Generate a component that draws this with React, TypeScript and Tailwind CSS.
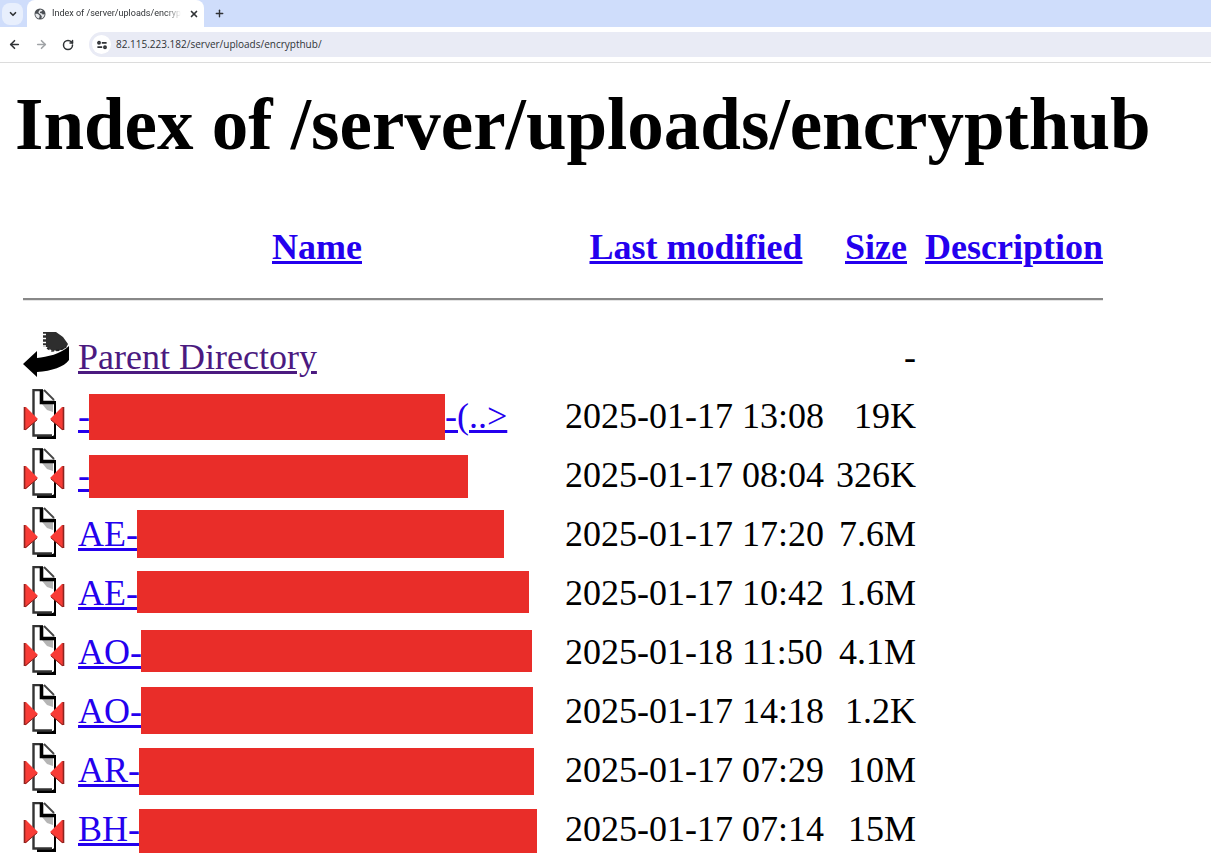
import { ArrowLeft, ArrowRight, ChevronDown, Plus, RotateCw, X } from 'lucide-react'

const headings = ['Name', 'Last modified', 'Size', 'Description']

const files = [
  { name: '-', rest: '-(..>', bar: 'mt-[7px] w-[356px] h-[46px]', date: '2025-01-17 13:08', size: '19K' },
  { name: '-', rest: '', bar: 'mt-[9px] w-[379px] h-[43px]', date: '2025-01-17 08:04', size: '326K' },
  { name: 'AE-', rest: '', bar: 'mt-[5px] w-[367px] h-[48px]', date: '2025-01-17 17:20', size: '7.6M' },
  { name: 'AE-', rest: '', bar: 'mt-[7px] w-[392px] h-[42px]', date: '2025-01-17 10:42', size: '1.6M' },
  { name: 'AO-', rest: '', bar: 'mt-[7px] w-[391px] h-[42px]', date: '2025-01-18 11:50', size: '4.1M' },
  { name: 'AO-', rest: '', bar: 'mt-[5px] w-[392px] h-[47px]', date: '2025-01-17 14:18', size: '1.2K' },
  { name: 'AR-', rest: '', bar: 'mt-[7px] w-[395px] h-[47px]', date: '2025-01-17 07:29', size: '10M' },
  { name: 'BH-', rest: '', bar: 'mt-[9px] w-[398px] h-[44px]', date: '2025-01-17 07:14', size: '15M' },
]

function GlobeIcon() {
  return (
    <svg className="h-3 w-3 shrink-0" viewBox="0 0 12 12" aria-hidden="true">
      <circle cx="6" cy="6" r="5.5" fill="#4b4f54" />
      <path d="M1.3 5.8H3.6L5.6 7.2V8.4L5 10.6C2.8 10.2 1.3 8.4 1.3 5.8ZM6 1.4 8.6 2.2 7.4 3.4 6 3.8V5L8 5.4 8.6 6.6 10.6 6.2C10.4 8.4 9 10 7.4 10.4L7.8 8.2 6.4 6.4 4.6 5 4.4 4Z" fill="#e8eaed" />
    </svg>
  )
}

function SiteInfoIcon() {
  return (
    <svg className="h-[10px] w-[10px]" viewBox="0 0 10 10" fill="none" stroke="#303336" strokeWidth="1.7" aria-hidden="true">
      <circle cx="2" cy="2.8" r="1.1" />
      <path d="M4.8 2.8H9.6M.4 7.2H5.2" />
      <circle cx="8" cy="7.2" r="1.1" />
    </svg>
  )
}

function BackIcon() {
  return (
    <svg className="h-[46px] w-[46px]" viewBox="0 0 46 46" aria-hidden="true">
      <path d="M20 1H33L40 6 45 13 43 17 35 20 28 19 24 16H20Z" fill="#2e2e2e" />
      <path d="M18 3.5h5M18 7.5h5M18 11.5h5M18 15h5" stroke="#fff" strokeWidth="1.6" />
      <path d="M24 17 29 20 37 19 43 16" fill="none" stroke="#222" strokeWidth="1.6" strokeDasharray="3 2" />
      <path d="M0 33 14 20V27C24 26 38 23 46 15V29C41 36 29 40 14 41V46Z" fill="#000" />
    </svg>
  )
}

function CompressedIcon() {
  return (
    <svg className="h-[50px] w-[42px]" viewBox="0 0 42 50" aria-hidden="true">
      <path d="M14 48.5H31.5V12" fill="none" stroke="#000" strokeWidth="3" />
      <path d="M10.5 1H21L31 12V46.5H10.5Z" fill="#fff" />
      <path d="M19 15H30V23L24 21Z" fill="#b5b5b5" />
      <path d="M20 1H10.5V46.5H29" fill="none" stroke="#333" strokeWidth="2.4" />
      <path d="M21 1 31 11" fill="none" stroke="#444" strokeWidth="1.8" />
      <path d="M18.5 1V13.5H32" fill="none" stroke="#000" strokeWidth="3.6" />
      <path d="M1 18H3L15 30 3 41H1ZM41 18H39L27 30 39 41H41Z" fill="#f83c36" />
      <path d="M1.5 18V41M40.5 18V41" stroke="#8c2420" strokeWidth="1.6" />
      <path d="M2 41 14 31M40 41 28 31" stroke="#8c2420" strokeWidth="1" />
    </svg>
  )
}

function BrowserBar() {
  return (
    <header className="border-b border-[#dcdcdc] font-['Open_Sans',sans-serif] text-[#303336]">
      <div className="flex h-[27px] items-center bg-[#cfddfb]">
        <button aria-label="Search tabs" className="ml-0.5 flex h-[22px] w-[21px] items-center justify-center rounded-lg bg-[#e8effd]">
          <ChevronDown size={10} strokeWidth={4} />
        </button>
        <div className="ml-1 flex h-full w-[177px] items-center rounded-t-lg bg-white pl-[7px] pr-2">
          <GlobeIcon />
          <span className="ml-1.5 flex-1 whitespace-nowrap font-['Roboto',sans-serif] text-[9px] [mask-image:linear-gradient(to_right,black_88%,transparent)]">
            Index of /server/uploads/encryp
          </span>
          <button aria-label="Close tab" className="ml-2">
            <X size={10} strokeWidth={4} />
          </button>
        </div>
        <button aria-label="New tab" className="ml-2.5">
          <Plus size={11} strokeWidth={3} />
        </button>
      </div>
      <div className="flex h-[35px] items-center bg-white pl-2">
        <button aria-label="Back">
          <ArrowLeft size={13} strokeWidth={3} />
        </button>
        <button aria-label="Forward" className="ml-3.5 text-[#a0a3a6]">
          <ArrowRight size={13} strokeWidth={3} />
        </button>
        <button aria-label="Reload" className="ml-3.5">
          <RotateCw size={12} strokeWidth={3} />
        </button>
        <div className="ml-[15px] flex h-[25px] flex-1 items-center rounded-l-full bg-[#e9ebf5] pl-[3px]">
          <button aria-label="View site information" className="flex h-[19px] w-[19px] items-center justify-center rounded-full bg-white">
            <SiteInfoIcon />
          </button>
          <input
            aria-label="Address"
            className="ml-[5px] flex-1 bg-transparent text-[10px] outline-none"
            defaultValue="82.115.223.182/server/uploads/encrypthub/"
          />
        </div>
      </div>
    </header>
  )
}

export default function App() {
  return (
    <div className="min-h-screen bg-white">
      <BrowserBar />
      <main className="overflow-x-auto pl-[15px] font-['Liberation_Serif',serif] text-[36px] leading-[41px] text-black">
        <h1 className="whitespace-nowrap pt-5 text-[73px] font-bold leading-[84px]">Index of /server/uploads/encrypthub</h1>
        <table className="ml-2 mt-[60px] whitespace-nowrap">
          <thead>
            <tr>
              <th className="w-[55px] p-0" />
              {headings.map((heading) => (
                <th key={heading} className="p-0 pr-[9px] text-center font-bold last:pr-0">
                  <a href="#" className="text-[#2400ee] underline decoration-[3px]">{heading}</a>
                </th>
              ))}
            </tr>
            <tr>
              <th colSpan={5} className="p-0">
                <hr className="mb-[27px] mt-[30px] border-0 border-b border-t-2 border-b-[#e4e4e4] border-t-[#888]" />
              </th>
            </tr>
          </thead>
          <tbody>
            <tr className="h-[59px]">
              <td className="p-0 pb-[7px]"><BackIcon /></td>
              <td className="p-0">
                <a href="#" className="text-[#4b1a80] underline decoration-[3px]">Parent Directory</a>
              </td>
              <td />
              <td className="p-0 pr-[9px] text-right">-</td>
              <td />
            </tr>
            {files.map((file) => (
              <tr key={file.date} className="h-[59px]">
                <td className="p-0 pb-[5px]"><CompressedIcon /></td>
                <td className="w-[487px] p-0">
                  <a href="#" className="flex h-[59px] items-start leading-[59px] text-[#2400ee] underline decoration-[3px]">
                    <span>{file.name}</span>
                    <span className={`-ml-px bg-[#e92d29] ${file.bar}`} />
                    <span>{file.rest}</span>
                  </a>
                </td>
                <td className="w-[271px] p-0">{file.date}</td>
                <td className="p-0 pr-[9px] text-right">{file.size}</td>
                <td />
              </tr>
            ))}
          </tbody>
        </table>
      </main>
    </div>
  )
}
